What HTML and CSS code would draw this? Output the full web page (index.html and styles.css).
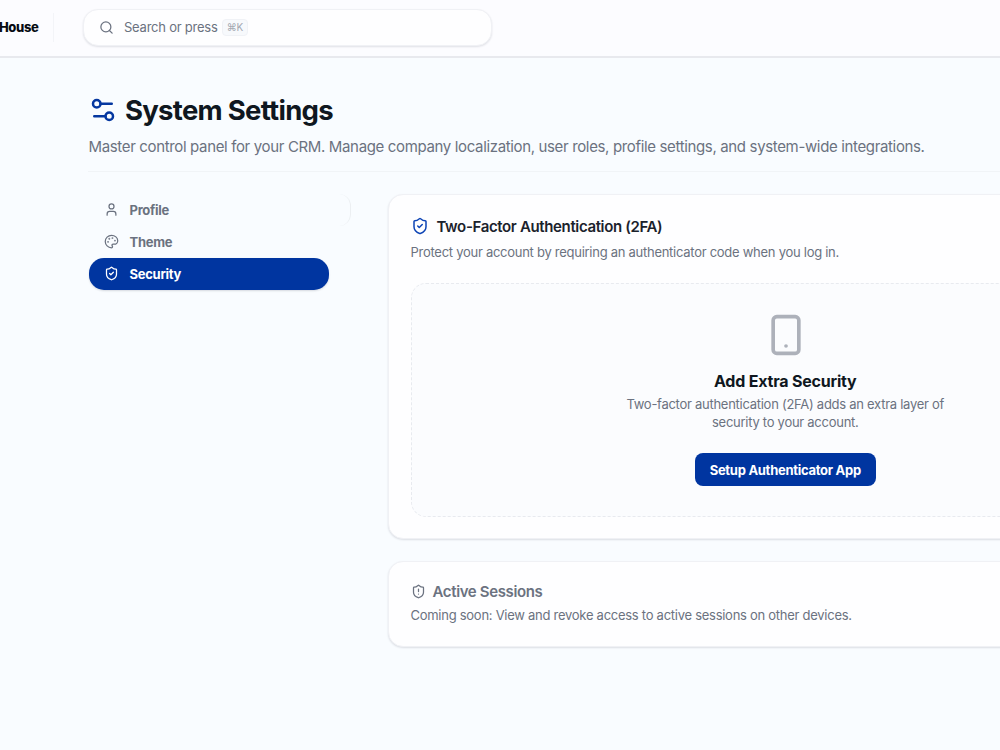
FILE: index.html
```html
<!DOCTYPE html>
<html lang="en">
<head>
    <meta charset="utf-8">
    <title>System Settings</title>
    <link rel="stylesheet" href="styles.css">
</head>
<body>
    <header class="topbar">
        <div class="brand">House</div>
        <div class="search">
            <svg class="icon search-icon" viewBox="0 0 24 24"><circle cx="11" cy="11" r="8"/><path d="m21 21-4.3-4.3"/></svg>
            <span class="search-text">Search or press</span>
            <kbd>⌘K</kbd>
        </div>
    </header>

    <main class="page">
        <div class="page-head">
            <h1>
                <svg class="icon title-icon" viewBox="0 0 24 24"><path d="M19 7h-9M14 17H5"/><circle cx="17" cy="17" r="3"/><circle cx="7" cy="7" r="3"/></svg>
                System Settings
            </h1>
            <p>Master control panel for your CRM. Manage company localization, user roles, profile settings, and system-wide integrations.</p>
        </div>

        <div class="layout">
            <aside class="sidebar">
                <nav class="tabs">
                    <a class="tab">
                        <svg class="icon" viewBox="0 0 24 24"><path d="M19 21v-2a4 4 0 0 0-4-4H9a4 4 0 0 0-4 4v2"/><circle cx="12" cy="7" r="4"/></svg>
                        Profile
                    </a>
                    <a class="tab">
                        <svg class="icon" viewBox="0 0 24 24"><circle class="dot" cx="13.5" cy="6.5" r=".5"/><circle class="dot" cx="17.5" cy="10.5" r=".5"/><circle class="dot" cx="8.5" cy="7.5" r=".5"/><circle class="dot" cx="6.5" cy="12.5" r=".5"/><path d="M12 2C6.5 2 2 6.5 2 12s4.5 10 10 10c.926 0 1.648-.746 1.648-1.688 0-.437-.18-.835-.437-1.125-.29-.289-.438-.652-.438-1.125a1.64 1.64 0 0 1 1.668-1.668h1.996c3.051 0 5.555-2.503 5.555-5.554C21.965 6.012 17.461 2 12 2z"/></svg>
                        Theme
                    </a>
                    <a class="tab active">
                        <svg class="icon" viewBox="0 0 24 24"><path d="M20 13c0 5-3.5 7.5-7.66 8.95a1 1 0 0 1-.67-.01C7.5 20.5 4 18 4 13V6a1 1 0 0 1 1-1c2 0 4.5-1.2 6.24-2.72a1.17 1.17 0 0 1 1.52 0C14.51 3.81 17 5 19 5a1 1 0 0 1 1 1z"/><path d="m9 12 2 2 4-4"/></svg>
                        Security
                    </a>
                </nav>
                <div class="sidebar-edge"></div>
            </aside>

            <div class="content">
                <section class="card twofa">
                    <h2>
                        <svg class="icon" viewBox="0 0 24 24"><path d="M20 13c0 5-3.5 7.5-7.66 8.95a1 1 0 0 1-.67-.01C7.5 20.5 4 18 4 13V6a1 1 0 0 1 1-1c2 0 4.5-1.2 6.24-2.72a1.17 1.17 0 0 1 1.52 0C14.51 3.81 17 5 19 5a1 1 0 0 1 1 1z"/><path d="m9 12 2 2 4-4"/></svg>
                        Two-Factor Authentication (2FA)
                    </h2>
                    <p class="card-desc">Protect your account by requiring an authenticator code when you log in.</p>
                    <div class="empty">
                        <svg class="icon phone-icon" viewBox="0 0 24 24"><rect x="5" y="2" width="14" height="20" rx="2"/><path d="M12 18h.01"/></svg>
                        <h3>Add Extra Security</h3>
                        <p>Two-factor authentication (2FA) adds an extra layer of security to your account.</p>
                        <button class="btn">Setup Authenticator App</button>
                    </div>
                </section>

                <section class="card sessions">
                    <h2>
                        <svg class="icon" viewBox="0 0 24 24"><path d="M20 13c0 5-3.5 7.5-7.66 8.95a1 1 0 0 1-.67-.01C7.5 20.5 4 18 4 13V6a1 1 0 0 1 1-1c2 0 4.5-1.2 6.24-2.72a1.17 1.17 0 0 1 1.52 0C14.51 3.81 17 5 19 5a1 1 0 0 1 1 1z"/><path d="M12 8v4M12 16h.01"/></svg>
                        Active Sessions
                    </h2>
                    <p class="card-desc">Coming soon: View and revoke access to active sessions on other devices.</p>
                </section>
            </div>
        </div>
    </main>
</body>
</html>
```

FILE: styles.css
```css
* {
    box-sizing: border-box;
    margin: 0;
    padding: 0;
}
body {
    height: 750px;
    overflow: hidden;
    background: #f9fcff;
    color: #0f1720;
    font-family: Inter, "Liberation Sans", sans-serif;
    font-size: 13px;
    letter-spacing: -0.27px;
}
.icon {
    flex: none;
    width: 15px;
    height: 15px;
    fill: none;
    stroke: currentColor;
    stroke-width: 2;
    stroke-linecap: round;
    stroke-linejoin: round;
}
.icon .dot { fill: currentColor; }

/* top bar */
.topbar {
    display: flex;
    align-items: center;
    height: 58px;
    padding-bottom: 2px;
    background: #fcfcff;
    border-bottom: 2px solid #e8e9ee;
}
.brand {
    display: flex;
    align-items: center;
    justify-content: flex-end;
    width: 54px;
    height: 29px;
    padding-right: 14.5px;
    border-right: 1px solid #f3f4f8;
    font-size: 13px;
    font-weight: 800;
    letter-spacing: -0.35px;
    color: #060b12;
}
.search {
    display: flex;
    align-items: center;
    width: 409px;
    height: 37px;
    margin-left: 29px;
    padding-left: 14.5px;
    background: #fefeff;
    border: 1px solid #f0f1f5;
    border-radius: 15px;
    box-shadow: 0 1px 2px rgba(20, 25, 50, 0.12);
    color: #6b7280;
}
.search-text {
    margin: 0 4px 0 10.5px;
    letter-spacing: -0.23px;
}
kbd {
    height: 17px;
    padding: 0 4px;
    border: 1px solid #f0f2f6;
    border-radius: 4px;
    background: #f7f9fc;
    color: #a3a8b1;
    font-family: Inter, "DejaVu Sans", sans-serif;
    font-size: 10px;
    line-height: 15px;
}

/* page heading */
.page {
    width: 1095px;
    margin-left: 88px;
    padding-top: 34px;
}
.page-head {
    height: 80px;
    border-bottom: 1px solid #f1f4f7;
}
h1 {
    display: flex;
    align-items: center;
    gap: 7px;
    height: 36px;
    font-size: 27.5px;
    font-weight: 700;
    letter-spacing: -0.72px;
}
.title-icon {
    width: 30px;
    height: 30px;
    color: #0537a0;
}
.page-head p {
    margin-top: 8px;
    padding-left: 0.5px;
    font-size: 15px;
    line-height: 22px;
    letter-spacing: -0.35px;
    color: #6b7280;
}

/* sidebar + cards */
.layout {
    display: flex;
    padding-top: 22px;
}
.sidebar {
    display: flex;
    width: 300px;
}
.tabs {
    width: 240px;
    margin-left: 0.5px;
}
.tab {
    display: flex;
    align-items: center;
    gap: 11px;
    height: 32px;
    padding: 0 0 1px 15px;
    border-radius: 15px;
    font-weight: 700;
    letter-spacing: -0.27px;
    color: #6b7280;
}
.tab.active {
    background: #0035a0;
    color: #fff;
    box-shadow: 0 1px 2px rgba(20, 25, 50, 0.15);
}
.sidebar-edge {
    width: 22.5px;
    height: 32px;
    border-right: 1px solid #eceff2;
    border-radius: 0 12px 12px 0;
}
.content { width: 795px; }
.card {
    padding: 21px 22px;
    background: #fefeff;
    border: 1px solid #f0f1f5;
    border-radius: 15px;
    box-shadow: 0 1px 2px rgba(20, 25, 50, 0.13);
}
.card h2 {
    display: flex;
    align-items: center;
    gap: 8px;
    height: 20px;
    font-size: 15px;
    font-weight: 600;
    letter-spacing: -0.36px;
    color: #1b222c;
}
.card-desc {
    line-height: 19px;
    color: #6b7280;
}
.twofa {
    height: 345px;
    padding-left: 21.5px;
}
.twofa h2 .icon {
    width: 18px;
    height: 18px;
    color: #0d44b5;
}
.twofa .card-desc { margin-top: 7px; }
.empty {
    display: flex;
    flex-direction: column;
    align-items: center;
    height: 234px;
    margin-top: 21px;
    padding-top: 29px;
    background: #fbfcfe;
    border: 1px dashed #e8eaef;
    border-radius: 15px;
}
.phone-icon {
    width: 44px;
    height: 44px;
    margin-left: 1px;
    color: #adb1ba;
}
.empty h3 {
    margin-top: 13px;
    font-size: 16px;
    font-weight: 700;
    line-height: 22px;
    letter-spacing: -0.2px;
}
.empty p {
    width: 330px;
    margin-top: 3px;
    line-height: 18px;
    text-align: center;
    color: #6b7280;
}
.btn {
    width: 181px;
    height: 33px;
    margin-top: 22px;
    border: 0;
    border-radius: 8px;
    background: #0035a0;
    color: #fff;
    font-family: inherit;
    font-size: 13px;
    font-weight: 700;
    letter-spacing: -0.28px;
}
.sessions {
    height: 86px;
    margin-top: 22px;
    padding: 19px 21.5px;
}
.sessions h2 {
    gap: 7px;
    color: #6b7280;
}
.sessions .card-desc { margin-top: 5px; }
```
